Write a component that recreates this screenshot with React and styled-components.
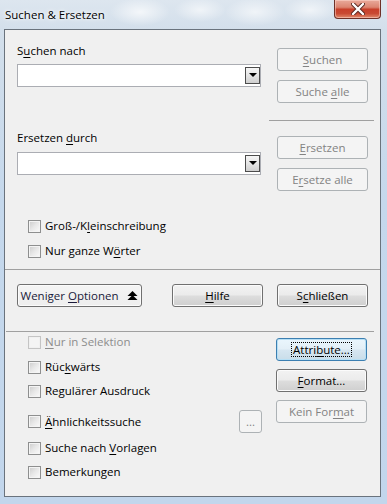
import { createGlobalStyle, styled, css } from "styled-components"

const GlobalStyle = createGlobalStyle`
  html, body { margin: 0; padding: 0; }
  body {
    font-family: "Open Sans", "Liberation Sans", sans-serif;
    font-size: 11.5px;
    color: #000;
  }
`

const Window = styled.div`
  width: 387px;
  height: 504px;
  display: flex;
  flex-direction: column;
  overflow: hidden;
  background:
    radial-gradient(ellipse 30px 14px at 140px 12px, rgba(255,255,255,0.7), transparent),
    radial-gradient(ellipse 26px 12px at 200px 10px, rgba(255,255,255,0.6), transparent),
    radial-gradient(ellipse 30px 14px at 255px 12px, rgba(255,255,255,0.6), transparent),
    radial-gradient(ellipse 26px 12px at 310px 10px, rgba(255,255,255,0.6), transparent),
    linear-gradient(180deg, #dde6ef 0%, #d3dfeb 6%, #c5d8ec 40%, #c2d6ec 100%);
`

const TitleBar = styled.div`
  height: 29px;
  flex-shrink: 0;
  display: flex;
  justify-content: space-between;
  align-items: flex-start;
`

const Title = styled.div`
  padding: 7px 0 0 5px;
  font-size: 11.5px;
  line-height: 16px;
  color: #000;
  text-shadow: 0 0 6px #fff, 0 0 3px #fff;
`

const CloseButton = styled.div`
  width: 45px;
  height: 18px;
  margin-right: 6px;
  border: 1px solid #6e3128;
  border-top: none;
  border-radius: 0 0 4px 4px;
  display: flex;
  align-items: center;
  justify-content: center;
  background: linear-gradient(180deg, #e9aa9b 0%, #dc8571 40%, #c8402a 52%, #c94a33 75%, #e08a6c 100%);
  box-shadow: inset 0 0 0 1px rgba(255,220,210,0.5);
`

const Client = styled.div`
  flex: 1;
  margin: 0 6px 7px 4px;
  border: 1px solid #6a737d;
  background: #f0f0f0;
  display: flex;
  flex-direction: column;
`

const TopSection = styled.div`
  display: flex;
  flex-direction: column;
  padding-left: 12px;
`

const Group = styled.div`
  display: flex;
  gap: 8px;
`

const Fields = styled.div`
  width: 244px;
  padding-top: ${p => p.$top}px;
  display: flex;
  flex-direction: column;
`

const FieldLabel = styled.div`
  height: 16px;
  line-height: 16px;
  margin-bottom: ${p => p.$gap}px;
`

const Combo = styled.div`
  height: 21px;
  border: 1px solid #abadb3;
  background: #fff;
  display: flex;
  align-items: center;
  justify-content: flex-end;
`

const ComboArrow = styled.div`
  width: 15px;
  height: 17px;
  border: 1px solid #4c4c4c;
  background: linear-gradient(180deg, #f6f6f6 0%, #e4e4e4 50%, #cfcfcf 100%);
  display: flex;
  justify-content: center;
  padding-top: 5px;
  box-sizing: border-box;
  &::after {
    content: "";
    width: 0;
    height: 0;
    border-left: 4px solid transparent;
    border-right: 4px solid transparent;
    border-top: 4px solid #000;
  }
`

const Actions = styled.div`
  width: 97px;
  padding: ${p => p.$pad};
  display: flex;
  flex-direction: column;
  gap: 9px;
  ${p => p.$rule && css`border-bottom: 1px solid #a0a0a0;`}
`

const Button = styled.div`
  height: 21px;
  width: ${p => p.$w || 89}px;
  margin-left: ${p => p.$ml || 0}px;
  flex-shrink: 0;
  box-sizing: content-box;
  display: flex;
  align-items: center;
  justify-content: center;
  border: 1px solid #707070;
  border-radius: 3px;
  line-height: 16px;
  white-space: pre;
  color: #000;
  background: linear-gradient(180deg, #f2f2f2 0%, #ebebeb 48%, #dddddd 52%, #cfcfcf 100%);
  box-shadow: inset 0 0 0 1px #fbfbfb;
  ${p => p.$flat && css`
    background: linear-gradient(180deg, #f4f4f4 0%, #eeeeee 100%);
    color: #1a1a3a;
  `}
  ${p => p.$focus && css`
    border-color: #3c7fb1;
    box-shadow: inset 0 0 0 1px #b6dff5;
    background: linear-gradient(180deg, #eaf6fd 0%, #e3eff7 48%, #d6e6f1 52%, #c9dde9 100%);
  `}
  ${p => p.$disabled && css`
    border-color: #adb2b5;
    background: #f4f4f4;
    box-shadow: none;
    color: #838383;
  `}
`

const ButtonText = styled.span`
  display: inline-block;
`

const ButtonIcon = styled.span`
  display: inline-flex;
  margin-left: 9px;
`

const FocusRing = styled.span`
  outline: 1px dotted #000;
  padding: 0 1px;
  line-height: 13px;
`

const Key = styled.span`
  text-decoration: underline;
  text-underline-offset: 2px;
`

const Options = styled.div`
  display: flex;
  flex-direction: column;
  padding: ${p => p.$pad};
  width: ${p => (p.$w ? `${p.$w}px` : "auto")};
  box-sizing: border-box;
`

const OptionRow = styled.label`
  display: flex;
  align-items: center;
  gap: 4px;
  height: ${p => p.$h || 16}px;
  margin-top: ${p => p.$mt || 0}px;
  line-height: 16px;
  color: ${p => (p.$disabled ? "#8d8d8d" : "#000")};
`

const Box = styled.span`
  width: 11px;
  height: 11px;
  flex-shrink: 0;
  border: 1px solid ${p => (p.$disabled ? "#c4c4c4" : "#8e8f8f")};
  background: ${p => (p.$disabled ? "#f4f4f4" : "linear-gradient(135deg, #cbcbcb 0%, #e8e8e8 50%, #fbfbfb 100%)")};
  box-shadow: inset 0 0 0 1px ${p => (p.$disabled ? "#f0f0f0" : "#f4f4f4")};
`

const Spacer = styled.span`
  flex: 1;
`

const Rule = styled.div`
  height: 1px;
  background: #a0a0a0;
  margin: ${p => p.$margin || "0"};
`

const ButtonRow = styled.div`
  display: flex;
  align-items: center;
  padding: 14px 0 24px 12px;
`

const Lower = styled.div`
  display: flex;
  gap: 14px;
  padding-left: 23px;
`

const LowerButtons = styled.div`
  display: flex;
  flex-direction: column;
  gap: 8px;
  padding-top: 6px;
`

const Stack = () => (
  <svg width="11" height="10" viewBox="0 0 11 10">
    <path d="M5.5 0 L10.5 5 L0.5 5 Z" fill="#000" />
    <path d="M5.5 4 L10.5 9 L0.5 9 Z" fill="#000" />
  </svg>
)

const CloseGlyph = () => (
  <svg width="14" height="12" viewBox="0 0 14 12">
    <path d="M2 1 L12 11 M12 1 L2 11" stroke="#5a2a22" strokeWidth="4.2" strokeLinecap="round" />
    <path d="M2 1 L12 11 M12 1 L2 11" stroke="#fff" strokeWidth="2.4" strokeLinecap="round" />
  </svg>
)

const Check = ({ children, disabled, ...rest }) => (
  <OptionRow $disabled={disabled} {...rest}>
    <Box $disabled={disabled} />
    <span>{children}</span>
  </OptionRow>
)

const Btn = ({ children, ...rest }) => (
  <Button {...rest}>
    <ButtonText>{children}</ButtonText>
  </Button>
)

export default function App() {
  return (
    <>
      <GlobalStyle />
      <Window>
        <TitleBar>
          <Title>Suchen &amp; Ersetzen</Title>
          <CloseButton><CloseGlyph /></CloseButton>
        </TitleBar>
        <Client>
          <TopSection>
            <Group>
              <Fields $top={13}>
                <FieldLabel $gap={5}>S<Key>u</Key>chen nach</FieldLabel>
                <Combo><ComboArrow /></Combo>
              </Fields>
              <Actions $pad="18px 0 17px 8px" $rule>
                <Btn $disabled><Key>S</Key>uchen</Btn>
                <Btn $disabled>Suche <Key>a</Key>lle</Btn>
              </Actions>
            </Group>
            <Group>
              <Fields $top={9}>
                <FieldLabel $gap={6}>Ersetzen <Key>d</Key>urch</FieldLabel>
                <Combo><ComboArrow /></Combo>
              </Fields>
              <Actions $pad="15px 0 0 8px">
                <Btn $disabled><Key>E</Key>rsetzen</Btn>
                <Btn $disabled>E<Key>r</Key>setze alle</Btn>
              </Actions>
            </Group>
          </TopSection>
          <Options $pad="27px 0 10px 23px">
            <Check>Groß-/K<Key>l</Key>einschreibung</Check>
            <Check $mt={9}>Nur ganze W<Key>ö</Key>rter</Check>
          </Options>
          <Rule />
          <ButtonRow>
            <Button $w={123} $flat>
              <ButtonText>Weniger <Key>O</Key>ptionen</ButtonText>
              <ButtonIcon><Stack /></ButtonIcon>
            </Button>
            <Btn $ml={30}><Key>H</Key>ilfe</Btn>
            <Btn $ml={14}>S<Key>c</Key>hließen</Btn>
          </ButtonRow>
          <Rule $margin="0 6px 0 1px" />
          <Lower>
            <Options $pad="2px 0 0 0" $w={234}>
              <Check disabled><Key>N</Key>ur in Selektion</Check>
              <Check $mt={9}>Rüc<Key>k</Key>wärts</Check>
              <Check $mt={8}>Regulärer Ausdruck</Check>
              <OptionRow $h={23} $mt={11}>
                <Box />
                <span><Key>Ä</Key>hnlichkeitssuche</span>
                <Spacer />
                <Btn $w={21} $disabled>...</Btn>
              </OptionRow>
              <Check $mt={7}>Suche nach <Key>V</Key>orlagen</Check>
              <Check $mt={8}>Bemerkungen</Check>
            </Options>
            <LowerButtons>
              <Button $focus><FocusRing>Attri<Key>b</Key>ute...</FocusRing></Button>
              <Btn><Key>F</Key>ormat...</Btn>
              <Btn $disabled>Kein For<Key>m</Key>at</Btn>
            </LowerButtons>
          </Lower>
        </Client>
      </Window>
    </>
  )
}
